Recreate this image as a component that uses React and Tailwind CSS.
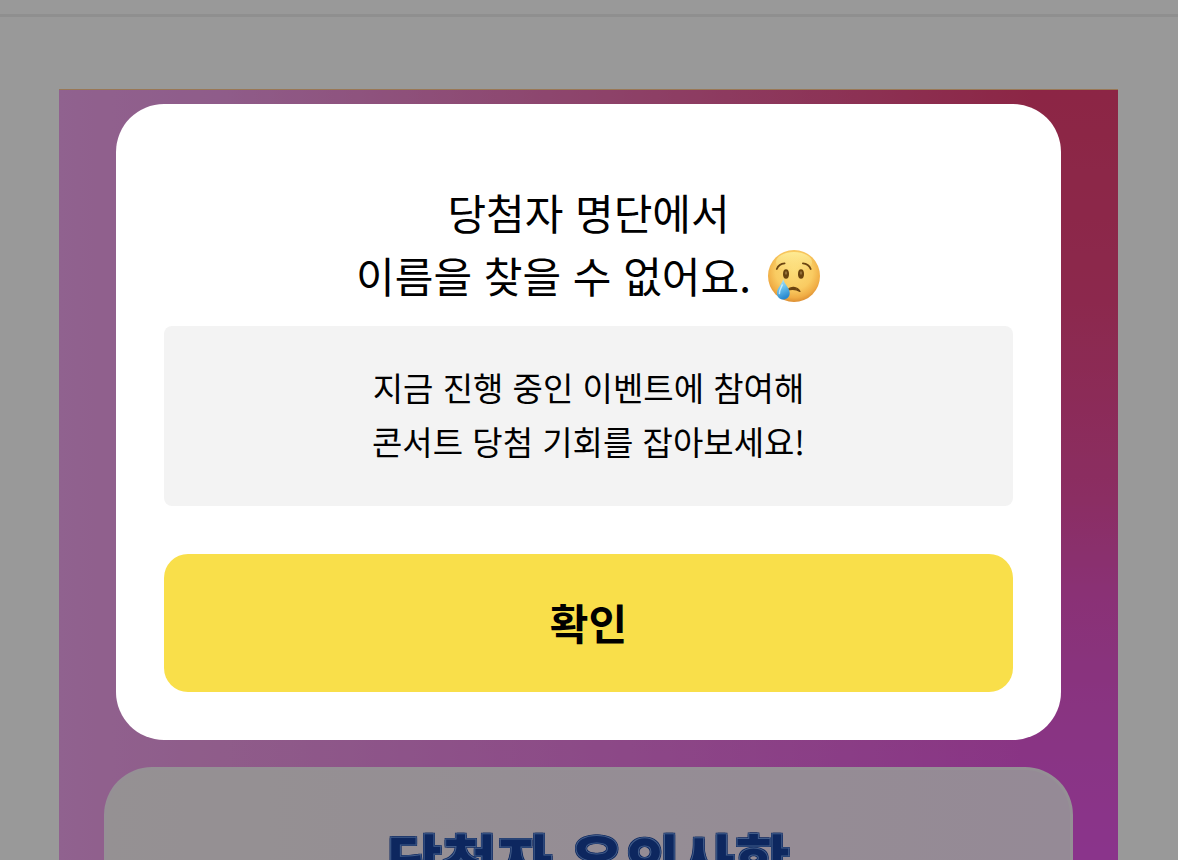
function CryingFace() {
  return (
    <svg viewBox="0 0 54 54" className="size-[54px] shrink-0" role="img" aria-label="우는 얼굴">
      <defs>
        <radialGradient id="face" cx="0.5" cy="0.4" r="0.6">
          <stop offset="0" stopColor="#fcdc78" />
          <stop offset="0.6" stopColor="#f9cb62" />
          <stop offset="0.86" stopColor="#f0ad45" />
          <stop offset="1" stopColor="#dd8f33" />
        </radialGradient>
        <linearGradient id="shine" x1="0" y1="0" x2="0" y2="1">
          <stop offset="0" stopColor="#fff3a0" stopOpacity="0.8" />
          <stop offset="1" stopColor="#fff3a0" stopOpacity="0" />
        </linearGradient>
        <linearGradient id="tear" x1="0" y1="0" x2="0.3" y2="1">
          <stop offset="0" stopColor="#c4ecfa" />
          <stop offset="0.5" stopColor="#6cc3ee" />
          <stop offset="1" stopColor="#2a8ad0" />
        </linearGradient>
      </defs>
      <circle cx="27" cy="28" r="26" fill="url(#face)" />
      <ellipse cx="27" cy="14" rx="18" ry="10" fill="url(#shine)" />
      <g transform="translate(0 1)">
        <path d="M9.800 20C11 17 13.800 14.600 17.600 14.400" fill="none" stroke="#6b4512" strokeWidth="1.800" strokeLinecap="round" />
        <path d="M43.700 20C42.500 17 39.700 14.600 35.900 14.400" fill="none" stroke="#6b4512" strokeWidth="1.800" strokeLinecap="round" />
        <ellipse cx="19" cy="25" rx="3" ry="4.700" fill="#69430f" />
        <ellipse cx="34" cy="25" rx="3" ry="4.700" fill="#69430f" />
        <ellipse cx="19" cy="24" rx="1.200" ry="1.700" fill="#94703a" />
        <ellipse cx="34" cy="24" rx="1.200" ry="1.700" fill="#94703a" />
        <path d="M20.500 41C23.500 37.300 30 37.300 33 42.500C29 39.800 25 39.800 20.500 41Z" fill="#6b4310" stroke="#6b4310" strokeWidth="1.200" strokeLinejoin="round" />
        <path d="M16.200 30C15 35.500 9.900 39 9.900 44C9.900 48 12.700 50.500 16.200 50.500C19.900 50.500 22.700 48 22.700 44C22.700 39 17.500 35.500 16.200 30Z" fill="url(#tear)" />
        <path d="M15.200 36C14.300 39 12 41.300 12.400 44.600" fill="none" stroke="#e6f8ff" strokeWidth="1.500" strokeLinecap="round" opacity="0.7" />
      </g>
    </svg>
  );
}

function EventPage() {
  return (
    <div className="flex h-screen flex-col overflow-hidden bg-white">
      <header className="h-[17px] shrink-0 border-b-3 border-[#efefef]" />
      <main className="mt-[72px] flex grow flex-col pr-[60px] pl-[59px]">
        <section className="flex grow flex-col border-t border-[#ffc890] bg-[linear-gradient(to_right,#f1a3ee_0%,#ee9ae6_15%,#ee9ae600_92%),linear-gradient(to_bottom,#e93f73_0px,#e94480_210px,#e84da5_410px,#e653c5_510px,#e457d8_620px,#e757e8_760px)] bg-origin-border px-[45px] pt-[677px]">
          <div className="rounded-t-[48px] border-3 border-b-0 border-[#f8f0f8] bg-[linear-gradient(to_right,#f8f2f5,#f9e6fa)] pt-11 pb-60 text-center">
            <h2 className="text-[60px] leading-[90px] font-black whitespace-nowrap text-[#16429f] [-webkit-text-stroke:1px_#6f9be6] [text-shadow:1px_1px_0_#16429f,-1px_-1px_0_#16429f,1px_-1px_0_#16429f,-1px_1px_0_#16429f]">
              당첨자 유의사항
            </h2>
          </div>
        </section>
      </main>
    </div>
  );
}

export default function App() {
  return (
    <div className="font-['Noto_Sans_CJK_KR',sans-serif]" lang="ko">
      <EventPage />
      <div className="fixed inset-0 flex items-start bg-black/40 pt-[104px] pr-[117px] pl-[116px]">
        <div role="dialog" aria-modal="true" aria-labelledby="dialog-title" className="flex w-full flex-col rounded-[48px] bg-white px-12 pt-[76px] pb-12 text-center text-black">
          <h1 id="dialog-title" className="text-[42px] leading-[63px] font-normal">
            당첨자 명단에서
            <span className="flex items-center justify-center gap-4">
              이름을 찾을 수 없어요.
              <CryingFace />
            </span>
          </h1>
          <p className="mt-5 rounded-lg bg-[#f3f3f3] pt-[34px] pb-[38px] text-[33px] leading-[54px]">
            지금 진행 중인 이벤트에 참여해
            <br />
            콘서트 당첨 기회를 잡아보세요!
          </p>
          <button type="button" className="mt-12 h-[138px] rounded-3xl bg-[#f9df4a] pb-1 text-[42px] leading-[63px] font-bold">
            확인
          </button>
        </div>
      </div>
    </div>
  );
}
